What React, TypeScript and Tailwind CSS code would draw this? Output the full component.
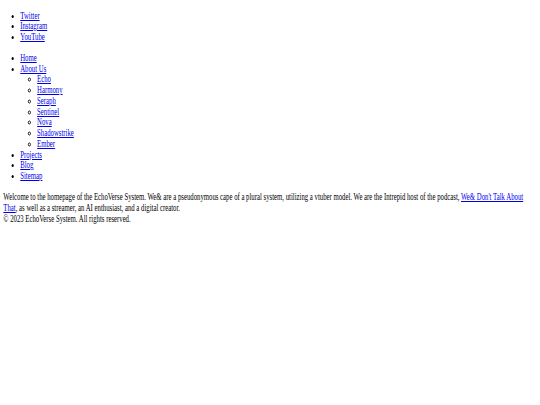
import React from 'react';

const SOCIAL = ['Twitter', 'Instagram', 'YouTube'];
const MEMBERS = ['Echo', 'Harmony', 'Seraph', 'Sentinel', 'Nova', 'Shadowstrike', 'Ember'];

function Link({ children }: { children: React.ReactNode }) {
    return <a href="#" className="text-[#0000ee] underline">{children}</a>;
}

export default function App() {
    return (
        // Page is rendered like an unstyled document, squeezed horizontally
        <div className="w-[744px] min-h-[405px] bg-white origin-top-left scale-x-[0.7258] px-[0.5em] pt-[10.6px] font-['Liberation_Serif',serif] text-[9.3px] leading-[10.75px] text-black">
            <ul className="list-disc pl-[2.5em]">
                {SOCIAL.map(s => (
                    <li key={s}><Link>{s}</Link></li>
                ))}
            </ul>

            {/* Nav */}
            <ul className="list-disc pl-[2.5em] mt-[10px]">
                <li><Link>Home</Link></li>
                <li>
                    <Link>About Us</Link>
                    <ul className="list-[circle] pl-[2.5em]">
                        {MEMBERS.map(m => (
                            <li key={m}><Link>{m}</Link></li>
                        ))}
                    </ul>
                </li>
                <li><Link>Projects</Link></li>
                <li><Link>Blog</Link></li>
                <li><Link>Sitemap</Link></li>
            </ul>

            <p className="mt-[10.3px]">
                Welcome to the homepage of the EchoVerse System. We&amp; are a pseudonymous cape of a plural system, utilizing a vtuber model. We are the Intrepid host of the podcast, <Link>We&amp; Don't Talk About That</Link>, as well as a streamer, an AI enthusiast, and a digital creator.
            </p>
            <div>© 2023 EchoVerse System. All rights reserved.</div>
        </div>
    );
}
